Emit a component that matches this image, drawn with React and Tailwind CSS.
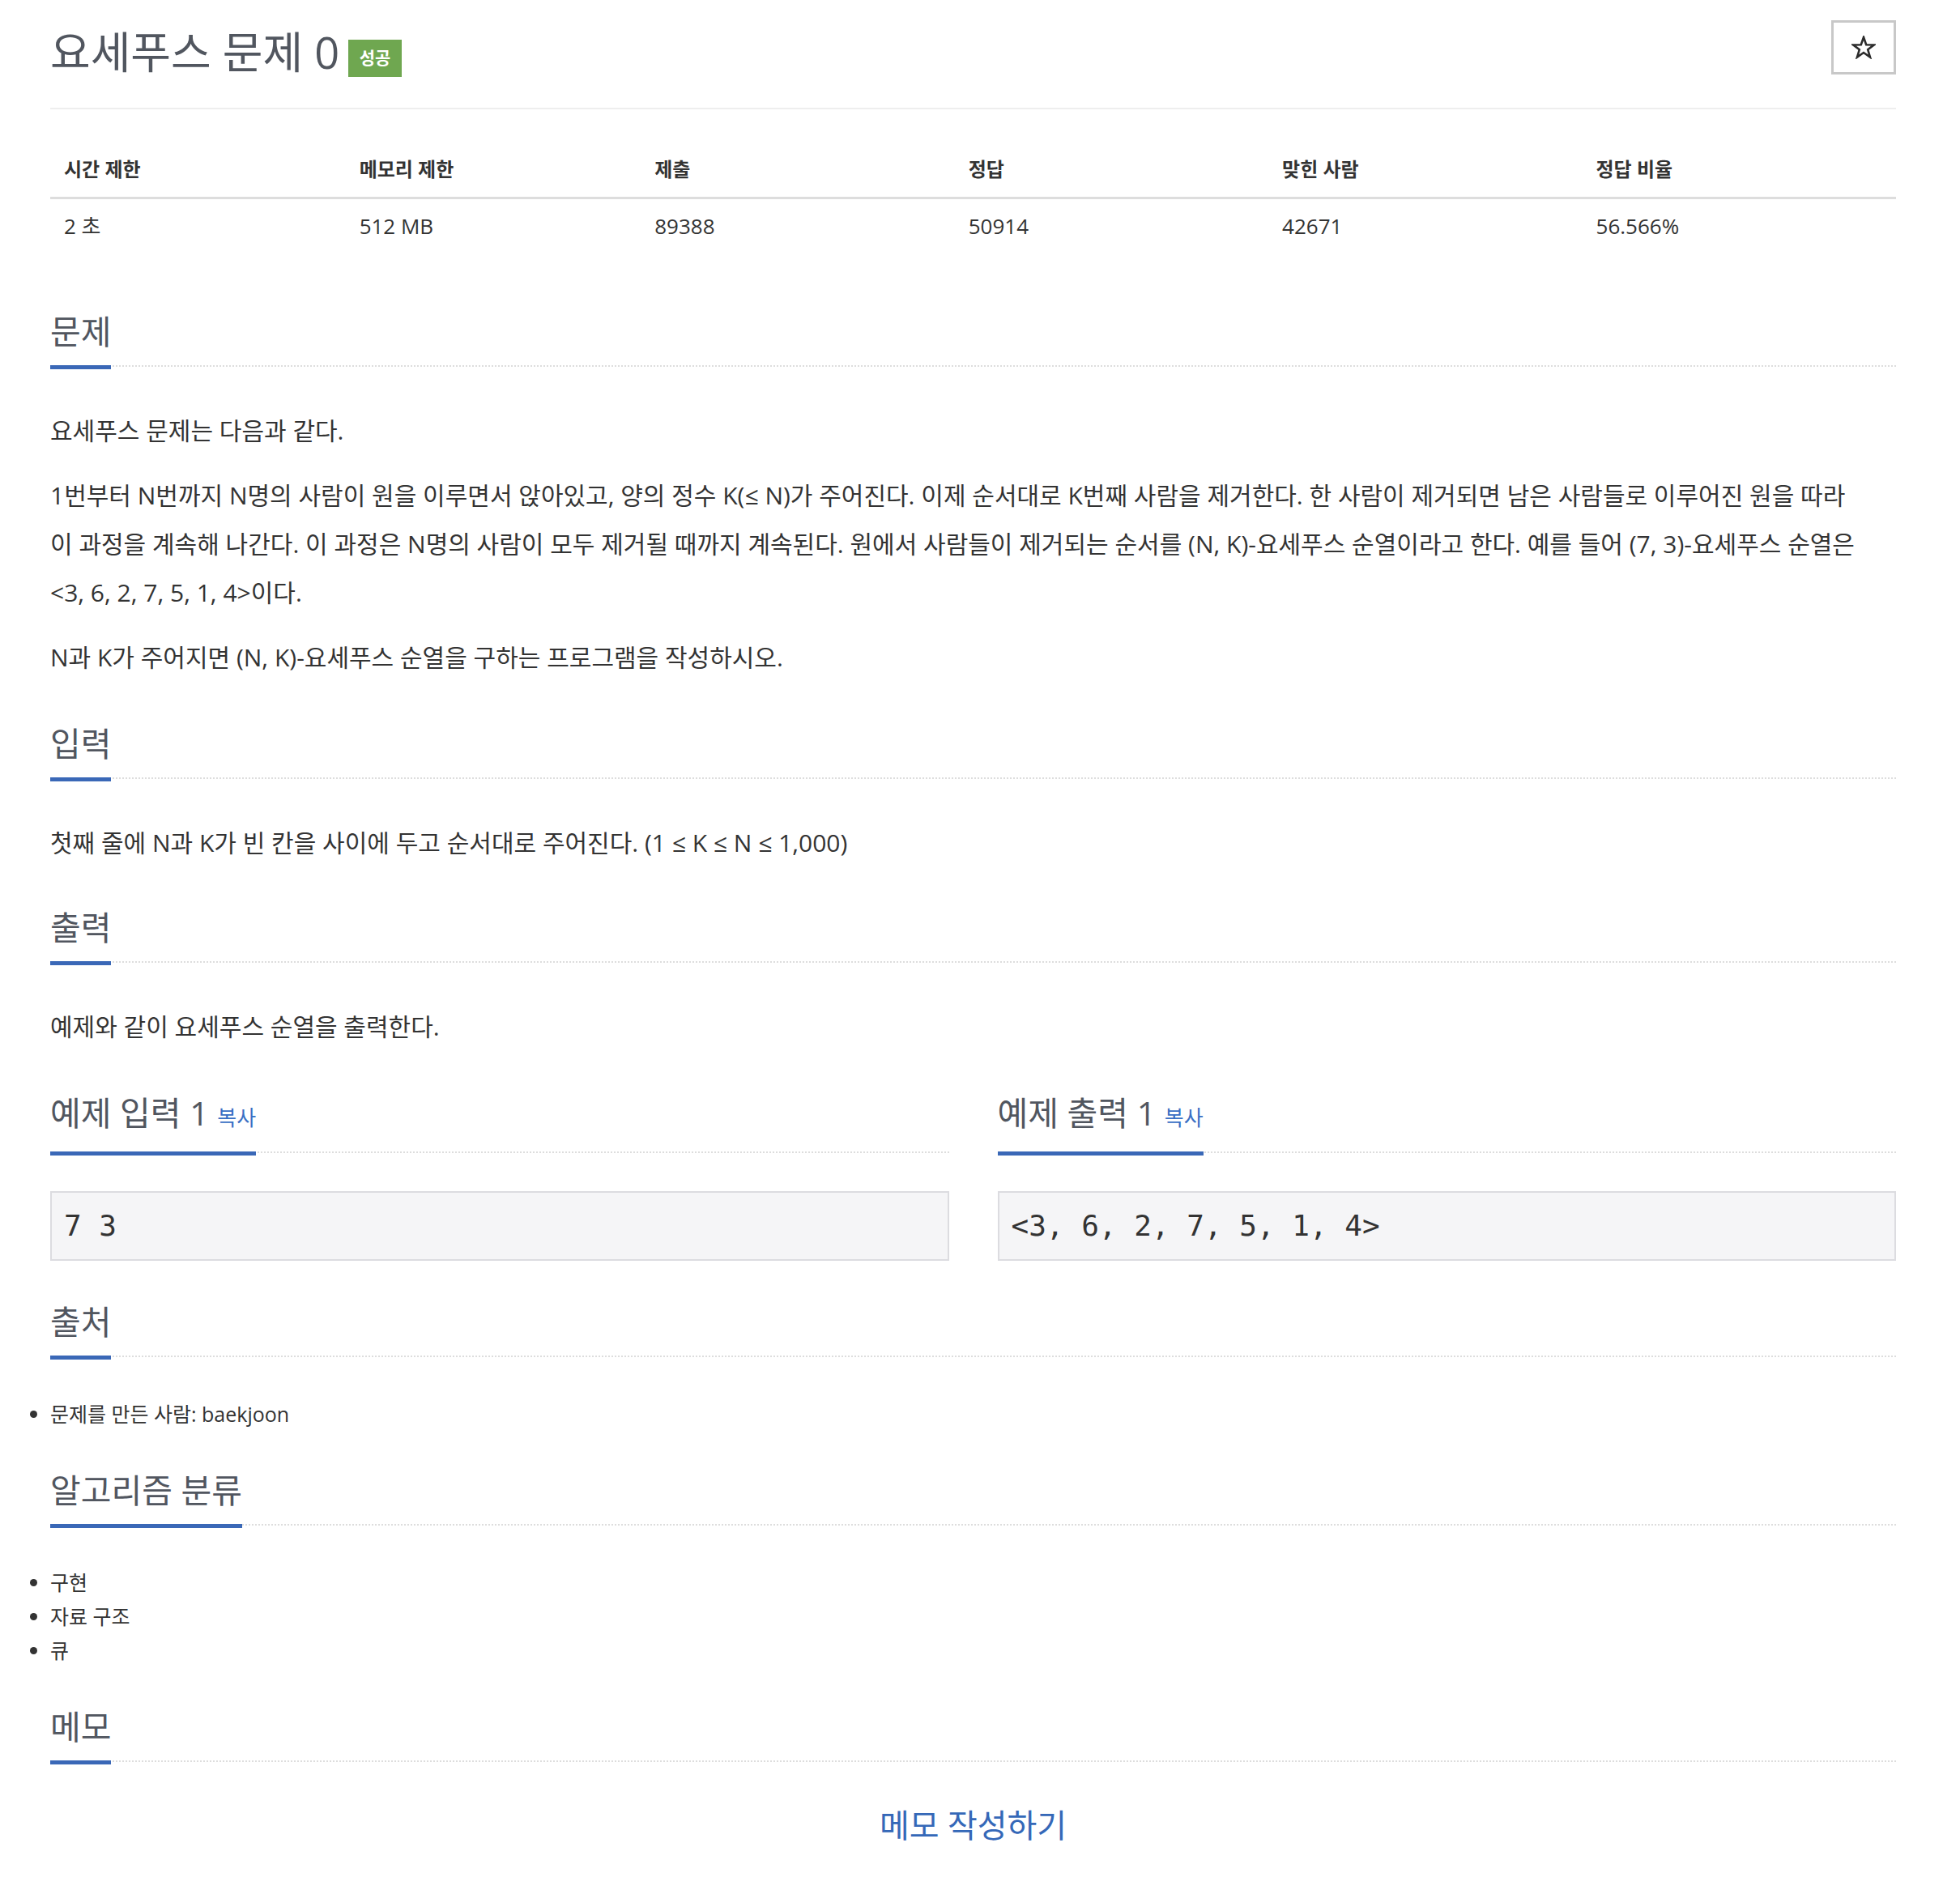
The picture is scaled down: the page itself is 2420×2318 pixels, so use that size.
import React from 'react';

const FONT = { fontFamily: '"Open Sans", "Noto Sans CJK KR", sans-serif' };

const Headline = ({ children }) => (
  <div className="flex border-b-2 border-dotted border-[#dddddd]">
    <h2 className="-mb-[5px] border-b-[5px] border-[#3a68b7] pb-[18px] text-[41px] leading-[48px] font-normal text-[#51565f]">
      {children}
    </h2>
  </div>
);

const stats = [
  { label: '시간 제한', value: '2 초', w: 'w-[16%]' },
  { label: '메모리 제한', value: '512 MB', w: 'w-[16%]' },
  { label: '제출', value: '89388', w: 'w-[17%]' },
  { label: '정답', value: '50914', w: 'w-[17%]' },
  { label: '맞힌 사람', value: '42671', w: 'w-[17%]' },
  { label: '정답 비율', value: '56.566%', w: 'w-[17%]' },
];

const Sample = ({ title, data }) => (
  <div>
    <Headline>
      {title} <a className="text-[26px] text-[#3a6fc4]">복사</a>
    </Headline>
    <pre
      className="mt-[47px] border-2 border-[#dcdce0] bg-[#f5f5f7] px-[15px] py-[15px] text-[36px] leading-[52px] text-[#333]"
      style={{ fontFamily: '"DejaVu Sans Mono", monospace' }}
    >
      {data}
    </pre>
  </div>
);

export default function App() {
  return (
    <div className="min-h-screen bg-white text-[#333]" style={FONT}>
      <div className="ml-[62px] w-[2279px] pt-[25px] pb-[38px]">
        {/* title row */}
        <div className="flex items-start justify-between">
          <div className="mt-[9px] flex items-start gap-[11px]">
            <h1 className="text-[54px] leading-[60px] font-normal text-[#51565f]">요세푸스 문제 0</h1>
            <span className="mt-[15px] flex h-[46px] w-[66px] items-center justify-center bg-[#6fa750] text-[21px] font-semibold text-white">
              성공
            </span>
          </div>
          <button className="flex h-[67px] w-[80px] items-center justify-center border-[3px] border-[#c8c8c8] bg-white">
            <svg width="30" height="29" viewBox="0 0 30 29" fill="none">
              <path
                d="M15 2 L18.2 11.2 L28 11.4 L20.2 17.3 L23 26.6 L15 21 L7 26.6 L9.8 17.3 L2 11.4 L11.8 11.2 Z"
                stroke="#2b2b2b"
                strokeWidth="2.6"
                strokeLinejoin="miter"
              />
            </svg>
          </button>
        </div>
        <div className="mt-[38px] h-[2px] bg-[#eeeeee]" />

        {/* stats table */}
        <table className="mt-[43px] w-full border-collapse">
          <thead>
            <tr className="border-b-[3px] border-[#dddddd]">
              {stats.map((s) => (
                <th key={s.label} className={`${s.w} px-[17px] pt-[13px] pb-[16px] text-left text-[24px] font-bold leading-[36px]`}>
                  {s.label}
                </th>
              ))}
            </tr>
          </thead>
          <tbody>
            <tr>
              {stats.map((s) => (
                <td key={s.label} className="px-[17px] pt-[15px] pb-[12px] text-[26px] leading-[36px]">
                  {s.value}
                </td>
              ))}
            </tr>
          </tbody>
        </table>

        {/* 문제 */}
        <section className="mt-[76px]">
          <Headline>문제</Headline>
          <div className="mt-[49px] text-[30px] leading-[60px]">
            <p className="mb-[20px]">요세푸스 문제는 다음과 같다.</p>
            <p className="mb-[20px]">
              1번부터 N번까지 N명의 사람이 원을 이루면서 앉아있고, 양의 정수 K(≤ N)가 주어진다. 이제 순서대로 K번째 사람을 제거한다. 한 사람이 제거되면 남은 사람들로 이루어진 원을 따라
              <br />
              이 과정을 계속해 나간다. 이 과정은 N명의 사람이 모두 제거될 때까지 계속된다. 원에서 사람들이 제거되는 순서를 (N, K)-요세푸스 순열이라고 한다. 예를 들어 (7, 3)-요세푸스 순열은
              <br />
              &lt;3, 6, 2, 7, 5, 1, 4&gt;이다.
            </p>
            <p className="mb-[20px]">N과 K가 주어지면 (N, K)-요세푸스 순열을 구하는 프로그램을 작성하시오.</p>
          </div>
        </section>

        {/* 입력 */}
        <section className="mt-[52px]">
          <Headline>입력</Headline>
          <p className="mt-[49px] mb-[20px] text-[30px] leading-[60px]">
            첫째 줄에 N과 K가 빈 칸을 사이에 두고 순서대로 주어진다. (1 ≤ K ≤ N ≤ 1,000)
          </p>
        </section>

        {/* 출력 */}
        <section className="mt-[50px]">
          <Headline>출력</Headline>
          <p className="mt-[49px] mb-[20px] text-[30px] leading-[60px]">예제와 같이 요세푸스 순열을 출력한다.</p>
        </section>

        {/* 예제 */}
        <section className="mt-[52px] grid grid-cols-2 gap-x-[60px]">
          <Sample title="예제 입력 1" data="7 3" />
          <Sample title="예제 출력 1" data="<3, 6, 2, 7, 5, 1, 4>" />
        </section>

        {/* 출처 */}
        <section className="mt-[51px]">
          <Headline>출처</Headline>
          <ul className="mt-[49px] list-disc text-[25px] leading-[42px]">
            <li>문제를 만든 사람: baekjoon</li>
          </ul>
        </section>

        {/* 알고리즘 분류 */}
        <section className="mt-[49px]">
          <Headline>알고리즘 분류</Headline>
          <ul className="mt-[49px] list-disc text-[25px] leading-[42px]">
            <li>구현</li>
            <li>자료 구조</li>
            <li>큐</li>
          </ul>
        </section>

        {/* 메모 */}
        <section className="mt-[49px]">
          <Headline>메모</Headline>
          <div className="mt-[54px] text-center">
            <a className="text-[40px] leading-[48px] text-[#3568b8]">메모 작성하기</a>
          </div>
        </section>
      </div>
    </div>
  );
}
